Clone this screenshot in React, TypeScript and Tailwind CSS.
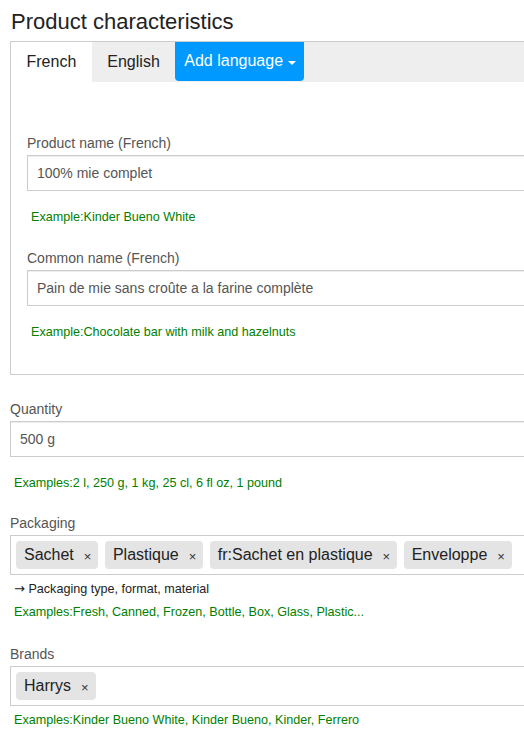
import React from "react";

const font = "font-['Liberation_Sans',Arial,Helvetica,sans-serif]";

function Example({ text, className = "" }: { text: string; className?: string }) {
  return <div className={`text-[12.6px] leading-[17px] text-[#008000] ${className}`}>{text}</div>;
}

function TextField({ label, value, example, className = "" }: { label: string; value: string; example: string; className?: string }) {
  return (
    <div className={className}>
      <div className="text-[14px] leading-[20px] text-[#555] mb-[2px]">{label}</div>
      <div className="h-[36px] border border-[#ccc] flex items-center pl-[9px] text-[14px] text-[#555] shadow-[inset_0_1px_1px_rgba(0,0,0,0.075)]">
        {value}
      </div>
      <Example text={example} className="mt-[18px] pl-[4px]" />
    </div>
  );
}

function Tag({ text }: { text: string }) {
  return (
    <div className="h-[28px] flex items-center bg-[#e4e4e4] rounded-[4px] pl-[8px] pr-[7px] text-[16px] text-[#222]">
      <span>{text}</span>
      <span className="ml-[10px] text-[13px] text-[#333] mt-[3px]">×</span>
    </div>
  );
}

function TagField({ label, tags, className = "" }: { label: string; tags: string[]; className?: string }) {
  return (
    <div className={className}>
      <div className="text-[14px] leading-[20px] text-[#555] mb-[2px]">{label}</div>
      <div className="h-[40px] border border-[#ccc] flex items-center gap-[6.5px] px-[5px]">
        {tags.map((t) => (
          <Tag key={t} text={t} />
        ))}
      </div>
    </div>
  );
}

export default function App() {
  return (
    <div className={`w-full min-h-screen overflow-hidden bg-white ${font}`}>
      <div className="w-[640px] pl-[10px]">
        <h2 className="pt-[10px] pl-[1px] text-[22px] leading-[24px] text-[#222] mb-[7px]">Product characteristics</h2>

        <div className="border border-[#ccc]">
          <div className="flex h-[40px] bg-[#eee]">
            <div className="bg-white px-[15.5px] text-[16px] leading-[40px] text-[#222]">French</div>
            <div className="px-[15.5px] text-[16px] leading-[40px] text-[#222]">English</div>
            <div className="h-[39px] bg-[#0099ff] rounded-b-[4px] pl-[9px] pr-[8px] flex items-center gap-[5px] text-[16px] text-white">
              <span className="-mt-[2px]">Add language</span>
              <span className="w-0 h-0 border-t-[4px] border-t-white border-x-[4px] border-x-transparent mt-[2px]" />
            </div>
          </div>
          <div className="px-[16px] pt-[51px] pb-[33px]">
            <TextField label="Product name (French)" value="100% mie complet" example="Example:Kinder Bueno White" />
            <TextField
              className="mt-[22px]"
              label="Common name (French)"
              value="Pain de mie sans croûte a la farine complète"
              example="Example:Chocolate bar with milk and hazelnuts"
            />
          </div>
        </div>

        <TextField
          className="mt-[24px]"
          label="Quantity"
          value="500 g"
          example="Examples:2 l, 250 g, 1 kg, 25 cl, 6 fl oz, 1 pound"
        />

        <TagField
          className="mt-[21px]"
          label="Packaging"
          tags={["Sachet", "Plastique", "fr:Sachet en plastique", "Enveloppe"]}
        />
        <div className="mt-[5px] pl-[4px] text-[12.6px] leading-[17px] text-[#222]">
          <span className="font-['DejaVu_Sans',sans-serif] text-[13px]">→</span> Packaging type, format, material
        </div>
        <Example className="mt-[6px] pl-[4px]" text="Examples:Fresh, Canned, Frozen, Bottle, Box, Glass, Plastic..." />

        <TagField className="mt-[23px]" label="Brands" tags={["Harrys"]} />
        <Example className="mt-[6px] pl-[4px]" text="Examples:Kinder Bueno White, Kinder Bueno, Kinder, Ferrero" />
      </div>
    </div>
  );
}
